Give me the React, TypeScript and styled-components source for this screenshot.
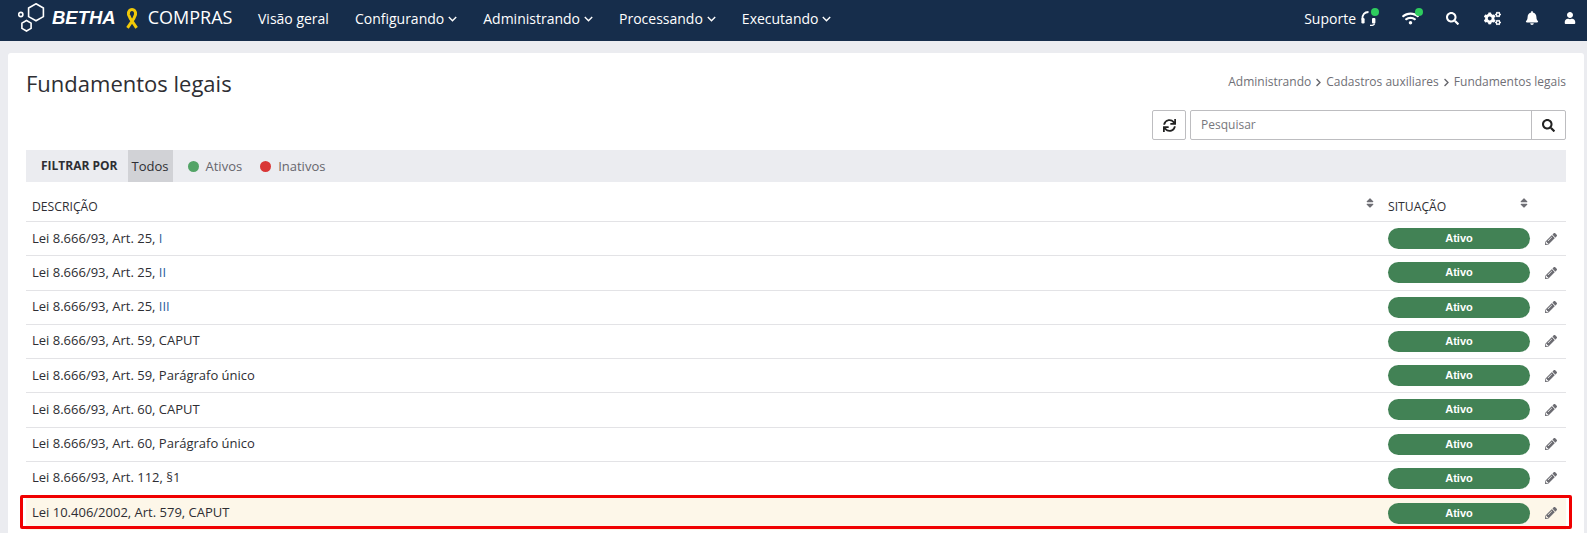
import React from "react";
import styled, { createGlobalStyle } from "styled-components";
import { FaBell, FaChevronRight, FaCogs, FaPencilAlt, FaSearch, FaSort, FaSync, FaUser, FaWifi } from "react-icons/fa";

const Global = createGlobalStyle`
  html, body { margin: 0; padding: 0; height: 533px; overflow: hidden; background: #ebecf0; }
  body { font-family: "Open Sans", "Liberation Sans", sans-serif; color: #2e2e33; font-size: 13px; }
`;
const Page = styled.div`display:flex;flex-direction:column;height:533px;overflow:hidden;`;
const TopBar = styled.header`
  flex:none;height:41px;box-sizing:border-box;background:#162d4b;color:#fff;display:flex;align-items:center;padding:0 7px 5px 18px;
`;
const Brand = styled.div`display:flex;align-items:center;width:240px;flex:none;`;
const BrandName = styled.span`font-family:"Liberation Sans",sans-serif;font-weight:700;font-style:italic;font-size:18.5px;margin:0 9px 0 6px;`;
const Product = styled.span`font-size:18px;margin-left:9px;margin-top:-2px;`;
const Nav = styled.nav`display:flex;align-items:center;gap:26px;flex:1;font-size:14px;`;
const NavItem = styled.span`display:inline-flex;align-items:center;svg{margin:2px 0 0 4px;}`;
const Tools = styled.div`display:flex;align-items:center;font-size:14px;`;
const ToolIcon = styled.span<{ $m: number }>`position:relative;display:flex;align-items:center;justify-content:center;width:20px;height:20px;margin-left:${p => p.$m}px;`;
const Dot = styled.i<{ $x: number }>`position:absolute;top:0;left:${p => p.$x}px;width:8px;height:8px;border-radius:50%;background:#2ecc5e;`;
const Card = styled.main`
  margin:12px 3px 0 8px;flex:1;background:#fff;border-radius:3px 3px 0 0;padding:0 18px;
`;
const TitleRow = styled.div`display:flex;justify-content:space-between;align-items:flex-start;height:57px;`;
const Title = styled.h1`margin:15px 0 0;font-size:22px;font-weight:400;line-height:30px;color:#2e2e33;`;
const Crumbs = styled.div`margin-top:21px;display:flex;align-items:center;gap:3px;color:#6f6f76;font-size:12px;line-height:16px;svg{font-size:9px;color:#66666c;}`;
const SearchRow = styled.div`display:flex;justify-content:flex-end;gap:4px;height:30px;`;
const IconButton = styled.button`width:34px;height:30px;padding:0;background:#fff;border:1px solid #bdbdc0;border-radius:2px;color:#222;display:flex;align-items:center;justify-content:center;font-size:13px;`;
const SearchBox = styled.div`width:376px;height:30px;box-sizing:border-box;border:1px solid #bdbdc0;border-radius:2px;display:flex;`;
const SearchInput = styled.div`flex:1;padding-left:10px;line-height:28px;font-size:12px;color:#77777d;`;
const SearchBtn = styled.div`width:33px;border-left:1px solid #bdbdc0;display:flex;align-items:center;justify-content:center;color:#222;font-size:13px;`;
const FilterBar = styled.div`margin-top:10px;height:32px;background:#ebecf0;display:flex;align-items:stretch;padding-left:15px;`;
const FilterLabel = styled.span`font-weight:700;font-size:12px;line-height:31px;margin-right:10px;`;
const FilterAll = styled.span`background:#d1d2d6;padding:0 4px;line-height:33px;font-size:13px;`;
const FilterOpt = styled.span`display:flex;align-items:center;gap:7px;margin:0 3px 0 15px;color:#66666d;font-size:13px;`;
const FilterDot = styled.i<{ $c: string }>`width:11px;height:11px;border-radius:50%;background:${p => p.$c};`;
const HeadRow = styled.div`display:grid;grid-template-columns:1fr 148px 35px;height:40px;box-sizing:border-box;border-bottom:1px solid #e3e3e6;padding-top:15px;font-size:12.2px;`;
const HeadCell = styled.div`display:flex;justify-content:space-between;padding:0 7px 0 6px;line-height:20px;svg{font-size:12px;color:#6e6e74;margin-top:0;}`;
const HeadCellS = styled(HeadCell)`padding:0 1px 0 5px;`;
const Row = styled.div<{ $mark?: boolean }>`
  position:relative;display:grid;grid-template-columns:1fr 148px 35px;height:34.28px;box-sizing:border-box;align-items:center;
  border-bottom:${p => (p.$mark ? "0" : "1px solid #e3e3e6")};
  background:${p => (p.$mark ? "#fdf7e9" : "transparent")};
  font-size:13px;
`;
const Mark = styled.span`position:absolute;left:-6px;right:-6px;top:-1px;box-sizing:border-box;height:34px;border:3px solid #f00000;border-radius:2px;pointer-events:none;`;
const Desc = styled.div`padding:0 0 2px 6px;`;
const Blue = styled.span`color:#2c5f9e;`;
const StatusCell = styled.div`padding-left:5px;`;
const Pill = styled.div`width:142px;height:21px;border-radius:11px;background:#428255;color:#fff;font:700 11px/21px "Liberation Sans",sans-serif;text-align:center;`;
const Edit = styled.div`color:#6c6c72;font-size:12px;display:flex;justify-content:center;padding-left:4px;`;

const Logo = () => (
  <svg width="28" height="30" viewBox="0 0 28 30" fill="none" stroke="#fff" strokeWidth="1.6">
    <path d="M18 0.8l7.4 4.2v8.6L18 17.8l-7.4-4.2V5z" />
    <path d="M8.5 17.5l4.6 2.6v5.3l-4.6 2.6-4.6-2.6v-5.3z" />
    <circle cx="2.8" cy="11.5" r="2.1" />
  </svg>
);
const Ribbon = () => (
  <svg width="14" height="21" viewBox="0 0 14 21" fill="none" stroke="#f0c808" strokeWidth="3">
    <path d="M2.5 19.8L8.8 10.5 10.5 6.5C11 3 9 1.6 7 1.6S3 3 3.5 6.5L5.3 10.5l6.3 9.3" />
  </svg>
);
const Headset = () => (
  <svg width="15" height="15" viewBox="0 0 15 15" fill="#fff">
    <path d="M1.4 8C1.2 3.5 3.5 1 7.5 1" fill="none" stroke="#fff" strokeWidth="1.8" />
    <rect x="0.4" y="7" width="3.2" height="5.5" rx="1.2" />
    <rect x="11" y="7" width="3.4" height="5.5" rx="1" />
    <path d="M13.5 12.4c0 1.5-1.2 1.9-4.5 1.9" fill="none" stroke="#fff" strokeWidth="1.3" />
  </svg>
);
const Caret = () => (
  <svg width="9" height="6" viewBox="0 0 9 6" fill="none" stroke="#fff" strokeWidth="1.4">
    <path d="M0.8 1l3.7 3.7L8.2 1" />
  </svg>
);

const rows: React.ReactNode[] = [
  <>Lei 8.666/93, Art. 25, <Blue>I</Blue></>,
  <>Lei 8.666/93, Art. 25, <Blue>II</Blue></>,
  <>Lei 8.666/93, Art. 25, <Blue>III</Blue></>,
  "Lei 8.666/93, Art. 59, CAPUT",
  "Lei 8.666/93, Art. 59, Parágrafo único",
  "Lei 8.666/93, Art. 60, CAPUT",
  "Lei 8.666/93, Art. 60, Parágrafo único",
  "Lei 8.666/93, Art. 112, §1",
  "Lei 10.406/2002, Art. 579, CAPUT",
];

export default function App() {
  return (
    <Page>
      <Global />
      <TopBar>
        <Brand>
          <Logo />
          <BrandName>BETHA</BrandName>
          <Ribbon />
          <Product>COMPRAS</Product>
        </Brand>
        <Nav>
          <NavItem>Visão geral</NavItem>
          <NavItem>Configurando <Caret /></NavItem>
          <NavItem>Administrando <Caret /></NavItem>
          <NavItem>Processando <Caret /></NavItem>
          <NavItem>Executando <Caret /></NavItem>
        </Nav>
        <Tools>
          <span>Suporte</span>
          <ToolIcon $m={2}><Headset /><Dot $x={13} /></ToolIcon>
          <ToolIcon $m={22}><FaWifi size={17} /><Dot $x={15} /></ToolIcon>
          <ToolIcon $m={22}><FaSearch size={13} /></ToolIcon>
          <ToolIcon $m={20}><FaCogs size={17} /></ToolIcon>
          <ToolIcon $m={20}><FaBell size={14} /></ToolIcon>
          <ToolIcon $m={18}><FaUser size={12} /></ToolIcon>
        </Tools>
      </TopBar>
      <Card>
        <TitleRow>
          <Title>Fundamentos legais</Title>
          <Crumbs>Administrando <FaChevronRight /> Cadastros auxiliares <FaChevronRight /> Fundamentos legais</Crumbs>
        </TitleRow>
        <SearchRow>
          <IconButton><FaSync /></IconButton>
          <SearchBox>
            <SearchInput>Pesquisar</SearchInput>
            <SearchBtn><FaSearch /></SearchBtn>
          </SearchBox>
        </SearchRow>
        <FilterBar>
          <FilterLabel>FILTRAR POR</FilterLabel>
          <FilterAll>Todos</FilterAll>
          <FilterOpt><FilterDot $c="#53a467" />Ativos</FilterOpt>
          <FilterOpt><FilterDot $c="#d93636" />Inativos</FilterOpt>
        </FilterBar>
        <div>
          <HeadRow>
            <HeadCell>DESCRIÇÃO <FaSort /></HeadCell>
            <HeadCellS>SITUAÇÃO <FaSort /></HeadCellS>
            <div />
          </HeadRow>
          {rows.map((r, i) => (
            <Row key={i} $mark={i === rows.length - 1}>
              <Desc>{r}</Desc>
              <StatusCell><Pill>Ativo</Pill></StatusCell>
              <Edit><FaPencilAlt /></Edit>
              {i === rows.length - 1 && <Mark />}
            </Row>
          ))}
        </div>
      </Card>
    </Page>
  );
}
